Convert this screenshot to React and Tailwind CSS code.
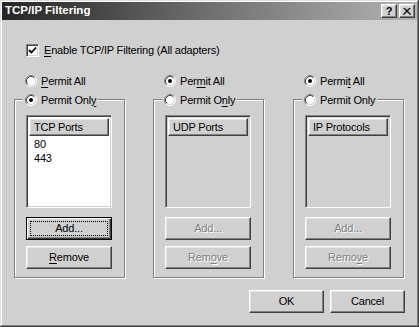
const face = 'bg-[#d0d0d0]';
const raised =
  'border border-t-white border-l-white border-b-[#404040] border-r-[#404040] shadow-[inset_-1px_-1px_#808080,inset_1px_1px_#e4e4e4]';
const sunken =
  'border border-t-[#808080] border-l-[#808080] border-b-white border-r-white shadow-[inset_1px_1px_#404040,inset_-1px_-1px_#d0d0d0]';
const disabledText = 'text-[#808080] [text-shadow:1px_1px_0_#ffffff]';

const Radio = ({ checked }) => (
  <svg width="12" height="12" viewBox="0 0 12 12" className="shrink-0">
    <circle cx="6" cy="6" r="5" fill="#ffffff" />
    <path d="M2.11 9.89 A5.5 5.5 0 0 1 9.89 2.11" fill="none" stroke="#808080" />
    <path d="M9.89 2.11 A5.5 5.5 0 0 1 2.11 9.89" fill="none" stroke="#ffffff" />
    <path d="M2.82 9.18 A4.5 4.5 0 0 1 9.18 2.82" fill="none" stroke="#404040" />
    <path d="M9.18 2.82 A4.5 4.5 0 0 1 2.82 9.18" fill="none" stroke="#d0d0d0" />
    {checked && <circle cx="6" cy="6" r="2" fill="#000000" />}
  </svg>
);

// label with one underlined access key
const Label = ({ text, k }) => (
  <span>
    {text.slice(0, k)}
    <span className="underline underline-offset-[2px]">{text[k]}</span>
    {text.slice(k + 1)}
  </span>
);

const Btn = ({ children, focused, disabled, className = '' }) => (
  <div
    className={`relative flex items-center justify-center ${
      focused
        ? 'border border-black shadow-[inset_1px_1px_#ffffff,inset_-1px_-1px_#404040,inset_-2px_-2px_#808080]'
        : raised
    } ${disabled ? disabledText : 'text-black'} ${className}`}
  >
    {focused && <div className="absolute inset-[3px] border border-dotted border-black" />}
    {children}
  </div>
);

const Column = ({ allKey, onlyKey, permitAll, header, items, enabled, removeKey, className = '' }) => (
  <div className={`w-[111px] flex flex-col ${className}`}>
    <div className="ml-[11px] h-[14px] flex items-center gap-[4px]">
      <Radio checked={permitAll} />
      <Label text="Permit All" k={allKey} />
    </div>

    <div className="mt-[11px] h-[179px] flex flex-col border border-[#808080] shadow-[inset_1px_1px_#ffffff,1px_1px_#ffffff]">
      {/* caption */}
      <div className={`-mt-[7px] ml-[8px] px-[2px] w-fit h-[14px] flex items-center gap-[4px] ${face}`}>
        <Radio checked={!permitAll} />
        {onlyKey >= 0 ? <Label text="Permit Only" k={onlyKey} /> : <span>Permit Only</span>}
      </div>

      {/* list */}
      <div className={`mt-[8px] ml-[11px] w-[86px] h-[93px] p-[2px] flex flex-col ${sunken} ${enabled ? 'bg-white' : face}`}>
        <div className={`h-[18px] flex items-center pl-[4px] ${face} ${raised}`}>{header}</div>
        <div className="pl-[5px] pt-[1px] leading-[14px]">
          {items.map((it) => (
            <div key={it}>{it}</div>
          ))}
        </div>
      </div>

      <Btn focused={enabled} disabled={!enabled} className="mt-[9px] ml-[11px] w-[86px] h-[23px]">
        Add...
      </Btn>
      <Btn disabled={!enabled} className="mt-[6px] ml-[11px] w-[86px] h-[23px]">
        <Label text="Remove" k={removeKey} />
      </Btn>
    </div>
  </div>
);

export default function App() {
  return (
    <div
      className={`w-[419px] h-[327px] p-[2px] flex flex-col ${face} text-black text-[11px] tracking-[-0.2px] font-['Liberation_Sans',Arial,sans-serif] shadow-[inset_-1px_-1px_#404040,inset_1px_1px_#e0e0e0,inset_-2px_-2px_#808080,inset_2px_2px_#ffffff]`}
    >
      {/* Title bar */}
      <div className="h-[18px] flex items-center justify-between pl-[3px] pr-[2px] bg-gradient-to-r from-[#262626] via-[#707070] to-[#b4b4b4]">
        <span className="text-white font-bold text-[11.5px] tracking-normal">TCP/IP Filtering</span>
        <div className="flex gap-[2px]">
          <div className={`w-[16px] h-[14px] flex items-center justify-center font-bold text-[11px] leading-none ${face} ${raised}`}>
            ?
          </div>
          <div className={`w-[16px] h-[14px] flex items-center justify-center ${face} ${raised}`}>
            <svg width="8" height="7" viewBox="0 0 8 7">
              <path d="M0.5 0 L7.5 7 M1.5 0 L8 6.5 M7.5 0 L0.5 7 M6.5 0 L0 6.5" stroke="#000" strokeWidth="1" />
            </svg>
          </div>
        </div>
      </div>

      {/* Enable checkbox */}
      <div className="mt-[24px] ml-[24px] h-[13px] flex items-center gap-[5px]">
        <div className={`w-[13px] h-[13px] bg-white flex items-center justify-center ${sunken}`}>
          <svg width="9" height="9" viewBox="0 0 9 9">
            <path d="M1 4 L3.5 6.5 L8 1.5" fill="none" stroke="#000" strokeWidth="1.8" />
          </svg>
        </div>
        <Label text="Enable TCP/IP Filtering (All adapters)" k={0} />
      </div>

      {/* Columns */}
      <div className="mt-[17px] ml-[12px] flex">
        <Column allKey={0} onlyKey={10} permitAll={false} header="TCP Ports" items={['80', '443']} enabled removeKey={0} />
        <Column
          className="ml-[28px]"
          allKey={3}
          onlyKey={8}
          permitAll
          header="UDP Ports"
          items={[]}
          enabled={false}
          removeKey={3}
        />
        <Column
          className="ml-[29px]"
          allKey={5}
          onlyKey={-1}
          permitAll
          header="IP Protocols"
          items={[]}
          enabled={false}
          removeKey={4}
        />
      </div>

      {/* Dialog buttons */}
      <div className="mt-[12px] mr-[12px] flex justify-end gap-[6px]">
        <Btn className="w-[75px] h-[23px]">OK</Btn>
        <Btn className="w-[75px] h-[23px]">Cancel</Btn>
      </div>
    </div>
  );
}
